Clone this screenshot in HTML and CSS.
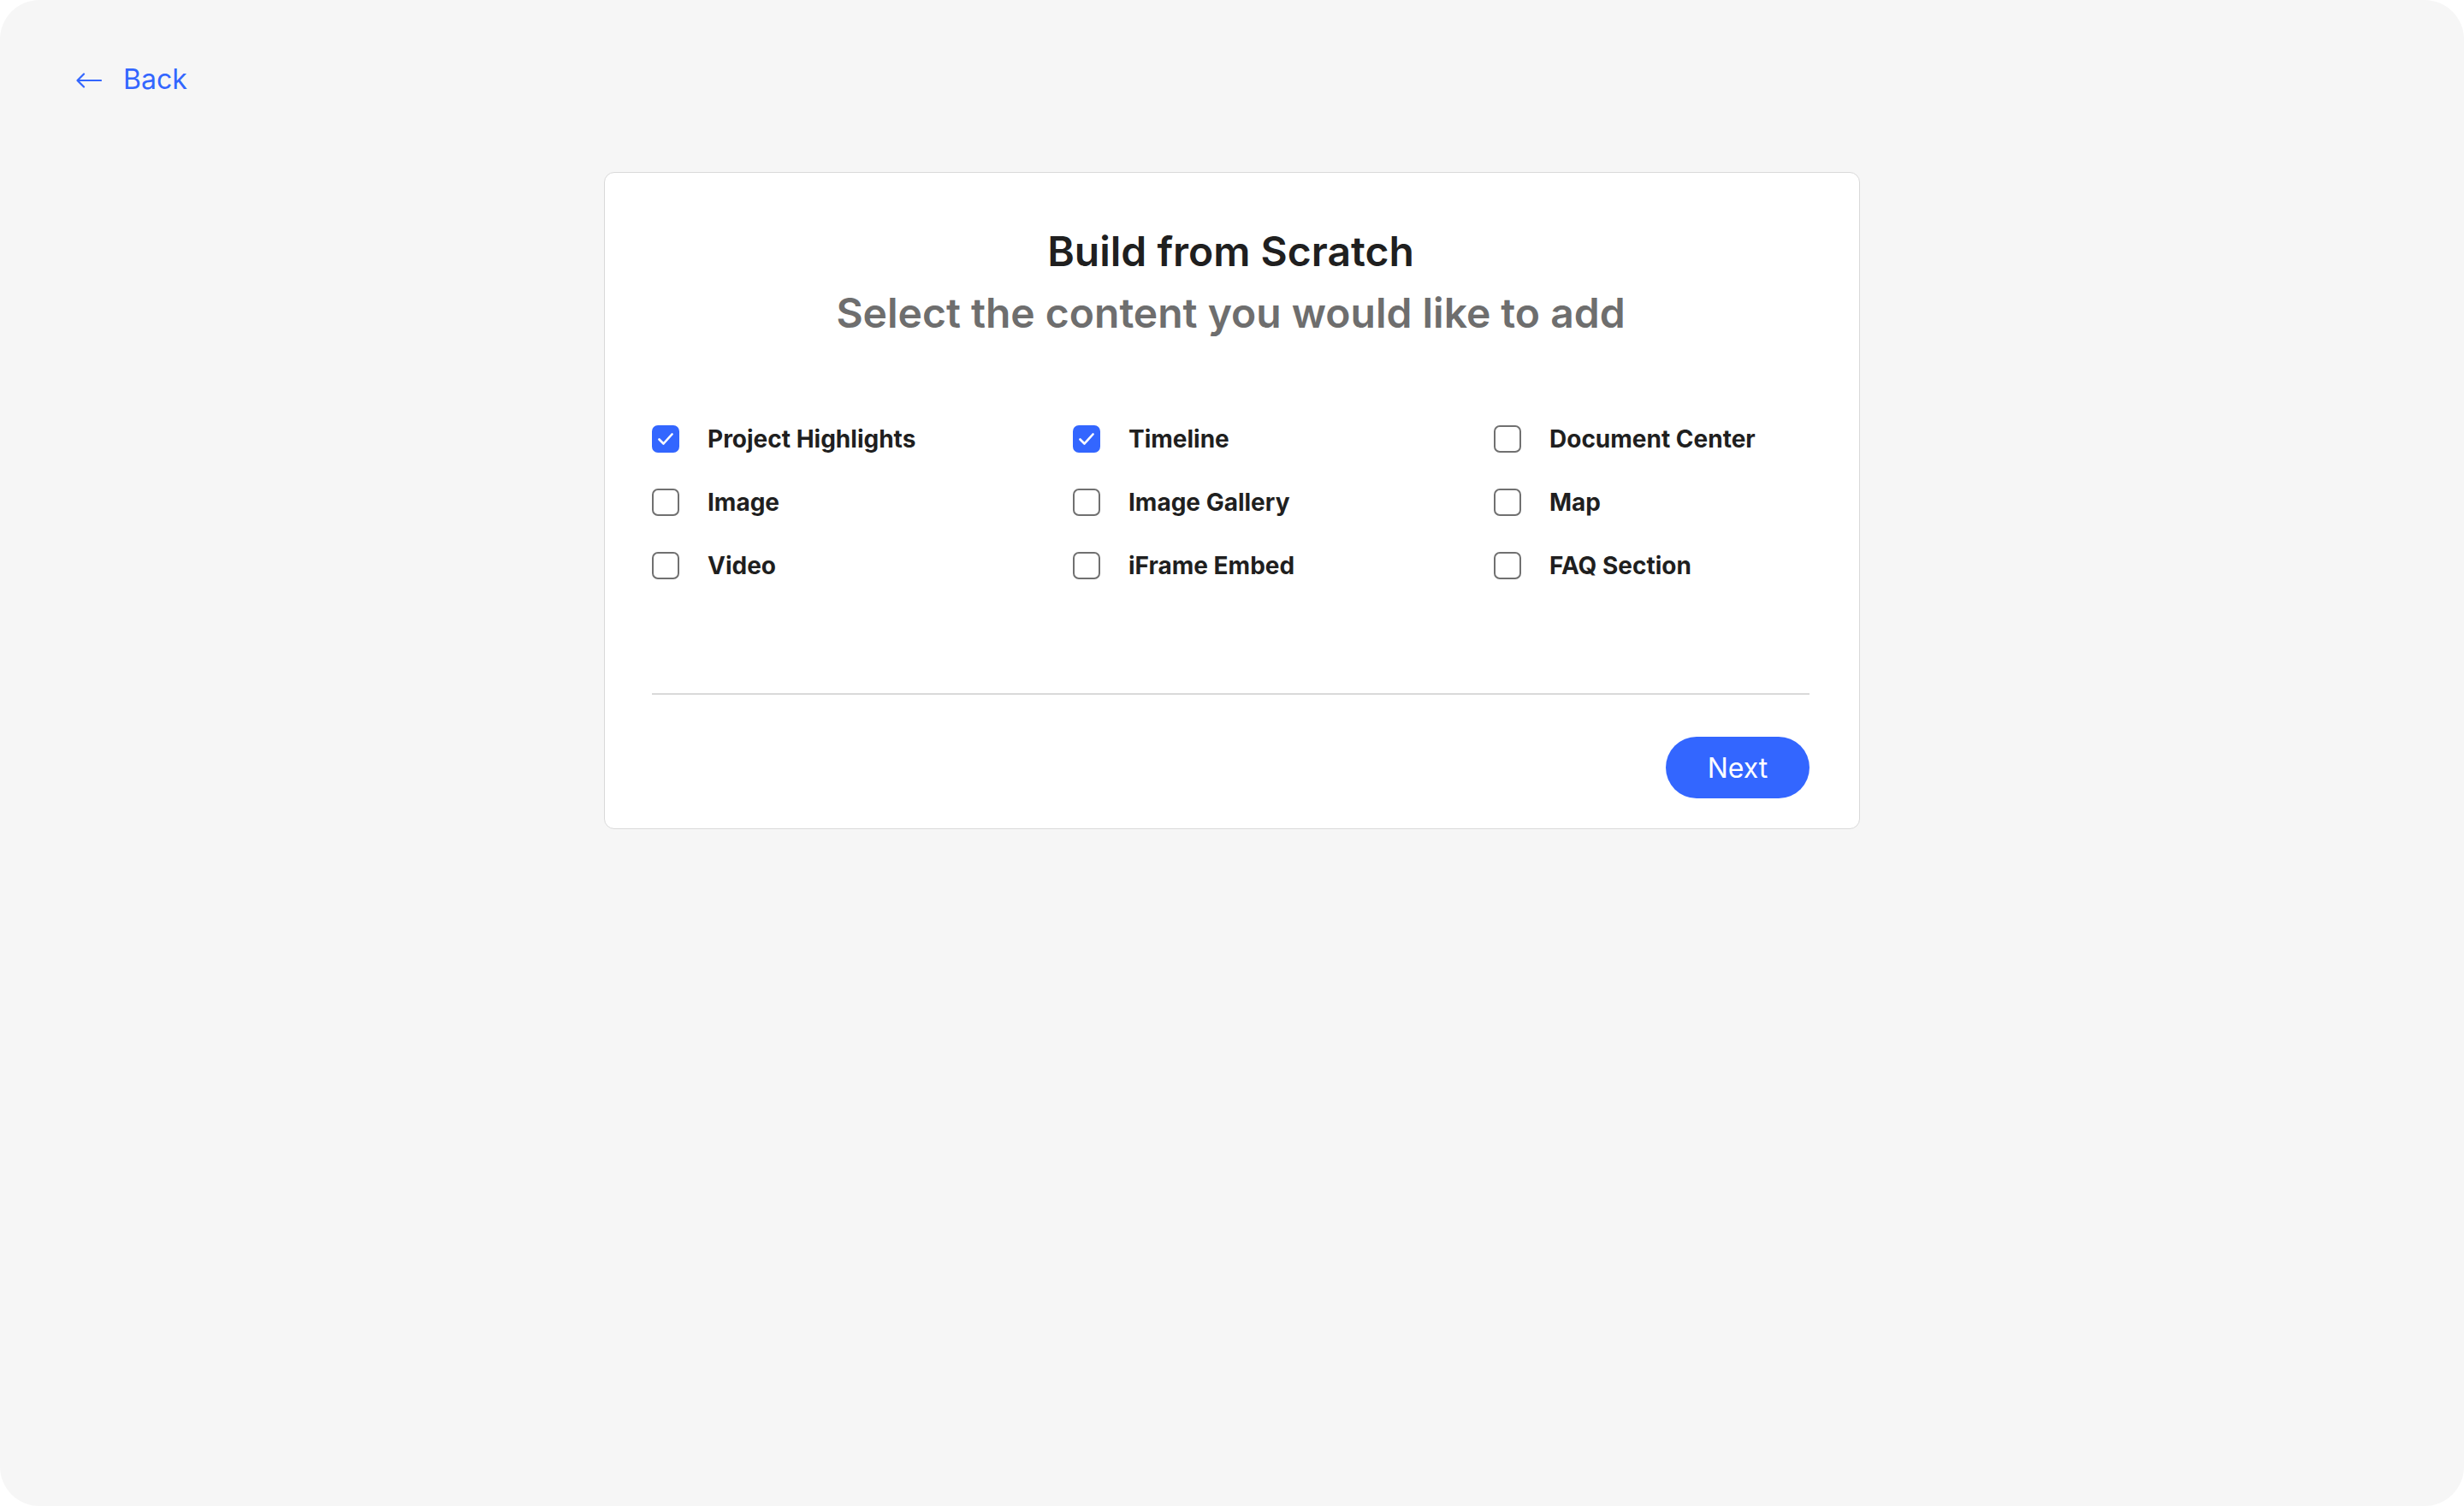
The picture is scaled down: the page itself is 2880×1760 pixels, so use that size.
FILE: index.html
```html
<!DOCTYPE html>
<html lang="en">
<head>
<meta charset="utf-8">
<title>Build from Scratch</title>
<link rel="stylesheet" href="styles.css">
</head>
<body>
<div class="screen">
  <header class="topbar">
    <a class="back" href="#">
      <svg class="back-arrow" width="30" height="18" viewBox="0 0 30 18" aria-hidden="true">
        <path d="M1.5 9 H29 M9 1.5 L1.5 9 L9 16.5" fill="none" stroke="currentColor" stroke-width="2.2" stroke-linecap="round" stroke-linejoin="round"/>
      </svg>
      <span>Back</span>
    </a>
  </header>

  <main class="card">
    <h1 class="title">Build from Scratch</h1>
    <p class="subtitle">Select the content you would like to add</p>

    <ul class="options">
      <li class="option"><span class="box checked"><svg viewBox="0 0 32 32" width="32" height="32"><path d="M8.5 16.5 L13.5 21.5 L23.5 10.5" fill="none" stroke="#fff" stroke-width="2.6" stroke-linecap="round" stroke-linejoin="round"/></svg></span><span class="label">Project Highlights</span></li>
      <li class="option"><span class="box checked"><svg viewBox="0 0 32 32" width="32" height="32"><path d="M8.5 16.5 L13.5 21.5 L23.5 10.5" fill="none" stroke="#fff" stroke-width="2.6" stroke-linecap="round" stroke-linejoin="round"/></svg></span><span class="label">Timeline</span></li>
      <li class="option"><span class="box"></span><span class="label">Document Center</span></li>
      <li class="option"><span class="box"></span><span class="label">Image</span></li>
      <li class="option"><span class="box"></span><span class="label">Image Gallery</span></li>
      <li class="option"><span class="box"></span><span class="label">Map</span></li>
      <li class="option"><span class="box"></span><span class="label">Video</span></li>
      <li class="option"><span class="box"></span><span class="label">iFrame Embed</span></li>
      <li class="option"><span class="box"></span><span class="label">FAQ Section</span></li>
    </ul>

    <div class="divider"></div>

    <div class="actions">
      <button class="next" type="button">Next</button>
    </div>
  </main>
</div>
</body>
</html>
```

FILE: styles.css
```css
* { box-sizing: border-box; }

html, body {
  margin: 0;
  padding: 0;
  background: #ffffff;
}

body {
  font-family: Inter, "Noto Sans", sans-serif;
}

.screen {
  height: 1760px;
  background: #f6f6f6;
  border-radius: 46px;
  overflow: hidden;
  display: flex;
  flex-direction: column;
  align-items: center;
}

.topbar {
  align-self: stretch;
  padding: 73px 0 0 89px;
  height: 113px;
}

.back {
  display: inline-flex;
  align-items: center;
  gap: 25px;
  color: #3366ff;
  text-decoration: none;
  font-size: 32px;
  line-height: 40px;
  font-weight: 400;
}

.back-arrow {
  display: block;
  margin-top: 2px;
}

.card {
  margin-top: 88px;
  width: 1468px;
  background: #ffffff;
  border: 1.5px solid #d9d9d9;
  border-radius: 12px;
  padding: 56px 58px 35px 55px;
}

.title,
.subtitle {
  margin: 0;
  text-align: center;
  font-size: 48px;
  line-height: 72px;
  font-weight: 600;
}

.title {
  color: #1f1f1f;
}

.subtitle {
  color: #6e6e6e;
}

.options {
  list-style: none;
  margin: 74px 0 0;
  padding: 0;
  display: grid;
  grid-template-columns: 492px 492px 1fr;
}

.option {
  display: flex;
  align-items: center;
  height: 74px;
  gap: 33px;
}

.box {
  width: 32px;
  height: 32px;
  border: 2px solid #707070;
  border-radius: 7px;
  flex: none;
  display: block;
}

.box.checked {
  background: #3366ff;
  border-color: #3366ff;
}

.box.checked svg {
  display: block;
  margin: -2px;
}

.label {
  font-size: 28px;
  font-weight: 700;
  color: #1f1f1f;
  line-height: 40px;
}

.divider {
  margin-top: 112px;
  height: 2px;
  background: #d9d9d9;
}

.actions {
  display: flex;
  justify-content: flex-end;
  margin-top: 49px;
}

.next {
  width: 168px;
  height: 72px;
  border: none;
  border-radius: 36px;
  background: #3366ff;
  color: #ffffff;
  font-family: Inter, "Noto Sans", sans-serif;
  font-size: 32px;
  font-weight: 400;
  padding: 0;
}
```
